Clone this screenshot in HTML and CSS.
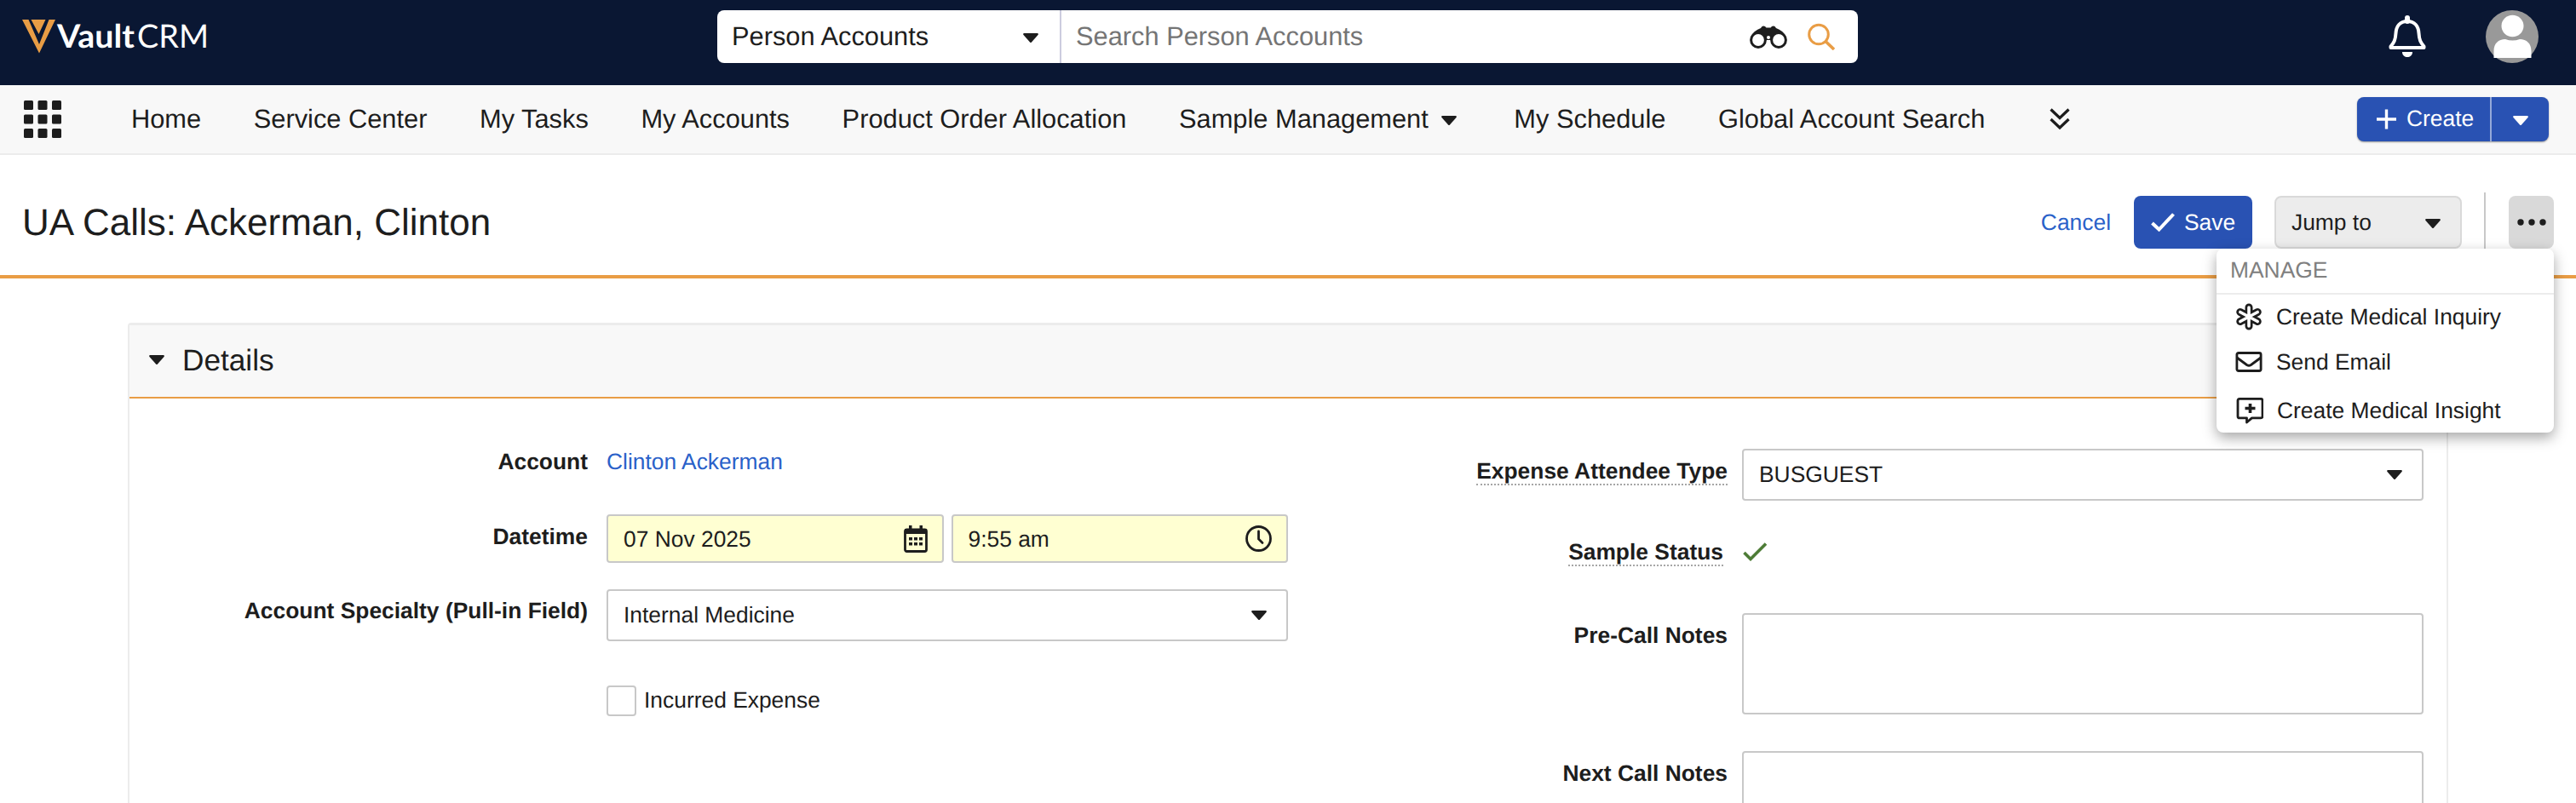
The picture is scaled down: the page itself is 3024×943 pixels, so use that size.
FILE: index.html
```html
<!DOCTYPE html>
<html lang="en">
<head>
    <meta charset="UTF-8">
    <meta name="viewport" content="width=device-width, initial-scale=1.0">
    <title>UA Calls: Ackerman, Clinton</title>
    <link rel="stylesheet" href="styles.css">
</head>
<body>
    <header class="topbar">
        <svg class="logo" width="230" height="64" viewBox="0 -12 230 64">
            <path fill="#e99d45" d="M0 1h7.500l12.500 29L31.500 1H39L20 40.500z"/>
            <path fill="#e99d45" d="M10.500 1h17L19.500 18z"/>
            <text class="logo-bold" x="41" y="34" textLength="91" lengthAdjust="spacingAndGlyphs">Vault</text>
            <text class="logo-light" x="135" y="34" textLength="84" lengthAdjust="spacingAndGlyphs">CRM</text>
        </svg>

        <div class="search">
            <div class="search-type">
                <span>Person Accounts</span>
                <svg class="caret" viewBox="0 0 18 11"><path d="M1 0h16q1.500 .5 .5 2L10 10.500q-1 1-2 0L.5 2Q-.5 .5 1 0z"/></svg>
            </div>
            <div class="search-field">
                <span>Search Person Accounts</span>
                <svg class="binoculars" width="44" height="28" viewBox="0 0 44 28">
                    <path d="M13 3q2-3.500 5-2l1.500 1.500h5L26 1q3-1.500 5 2 8 3 11 9l-13 0-7-1-7 1-13 0Q5 6 13 3z"/>
                    <path d="M12 7h20v10H12z"/>
                    <circle cx="10" cy="17" r="8.400" fill="#fff" stroke="#1d1d1d" stroke-width="3"/>
                    <circle cx="34" cy="17" r="8.400" fill="#fff" stroke="#1d1d1d" stroke-width="3"/>
                    <circle cx="22" cy="14" r="2" fill="#fff"/>
                </svg>
                <svg width="32" height="32" viewBox="0 0 32 32" fill="none" stroke="#e99d45" stroke-width="3">
                    <circle cx="13" cy="13.500" r="11.300"/>
                    <path d="M21 21.500l10 9.500" stroke-width="3.600"/>
                </svg>
            </div>
        </div>

        <div class="user-tools">
            <svg width="44" height="50" viewBox="0 0 44 50" fill="none" stroke="#fff" stroke-width="4" stroke-linejoin="round">
                <path d="M22 7C13 7 9 13 8.500 21 8 29 6.500 32 2.500 36.500V38h39v-1.500C37.500 32 36 29 35.500 21 35 13 31 7 22 7z"/>
                <path d="M22 7V3" stroke-width="6" stroke-linecap="round"/>
                <path d="M16 43h12c0 8-12 8-12 0z" fill="#fff" stroke="none"/>
            </svg>
            <svg width="62" height="62" viewBox="0 0 62 62">
                <circle cx="31" cy="31" r="31" fill="#999"/>
                <ellipse cx="31.500" cy="18.500" rx="13" ry="12.700" fill="#fff"/>
                <path fill="#fff" d="M9.500 56V48C9.500 39 15 34 23 34q8.500 3 17 0C48 34 53.500 39 53.500 48v8z"/>
            </svg>
        </div>
    </header>

    <nav class="navbar">
        <svg class="apps" width="44" height="44" viewBox="0 0 44 44">
            <g id="appsRow">
                <rect width="11" height="11" rx="1.500"/>
                <rect x="16.500" width="11" height="11" rx="1.500"/>
                <rect x="33" width="11" height="11" rx="1.500"/>
            </g>
            <use href="#appsRow" y="16.500"/>
            <use href="#appsRow" y="33"/>
        </svg>
        <div class="nav-items">
            <a>Home</a>
            <a>Service Center</a>
            <a>My Tasks</a>
            <a>My Accounts</a>
            <a>Product Order Allocation</a>
            <a>Sample Management <svg class="caret" viewBox="0 0 18 11"><path d="M1 0h16q1.500 .5 .5 2L10 10.500q-1 1-2 0L.5 2Q-.5 .5 1 0z"/></svg></a>
            <a>My Schedule</a>
            <a>Global Account Search</a>
        </div>
        <svg class="more-tabs" width="24" height="26" viewBox="0 0 24 26" fill="none" stroke="#1d1d1d" stroke-width="3.200">
            <path d="M1.500 1.500L12 11.500 22.500 1.500M1.500 13L12 23 22.500 13"/>
        </svg>
        <div class="create-btn">
            <div class="create-main">
                <svg width="23" height="24" viewBox="0 0 23 24" stroke="#fff" stroke-width="3.400"><path d="M11.500 .5v23M0 12h23"/></svg>
                <span>Create</span>
            </div>
            <div class="create-arrow">
                <svg class="caret" viewBox="0 0 18 11"><path d="M1 0h16q1.500 .5 .5 2L10 10.500q-1 1-2 0L.5 2Q-.5 .5 1 0z"/></svg>
            </div>
        </div>
    </nav>

    <div class="page-header">
        <h1>UA Calls: Ackerman, Clinton</h1>
        <div class="actions">
            <a class="link">Cancel</a>
            <div class="save-btn">
                <svg width="28" height="22" viewBox="0 0 28 22" fill="none" stroke="#fff" stroke-width="4"><path d="M1.500 12l8 7.500L26.500 1.500"/></svg>
                <span>Save</span>
            </div>
            <div class="jump-btn">
                <span>Jump to</span>
                <svg class="caret" viewBox="0 0 18 11"><path d="M1 0h16q1.500 .5 .5 2L10 10.500q-1 1-2 0L.5 2Q-.5 .5 1 0z"/></svg>
            </div>
            <div class="divider"></div>
            <div class="more-btn">
                <svg width="34" height="8" viewBox="0 0 34 8"><circle cx="4" cy="4" r="3.700"/><circle cx="17" cy="4" r="3.700"/><circle cx="30" cy="4" r="3.700"/></svg>
                <div class="menu">
                    <div class="menu-title">MANAGE</div>
                    <div class="menu-item">
                        <svg width="32" height="32" viewBox="0 0 32 32">
                            <g stroke="#1d1d1d" stroke-width="9" stroke-linecap="round">
                                <path d="M16 5v22M5.800 10.500l20.400 11M26.200 10.500l-20.400 11"/>
                            </g>
                            <g stroke="#fff" stroke-width="3.600" stroke-linecap="round">
                                <path d="M16 5v22M5.800 10.500l20.400 11M26.200 10.500l-20.400 11"/>
                            </g>
                        </svg>
                        <span>Create Medical Inquiry</span>
                    </div>
                    <div class="menu-item email">
                        <svg width="32" height="24" viewBox="0 0 32 24" fill="none" stroke="#1d1d1d" stroke-width="2.800">
                            <rect x="1.900" y="1.500" width="28.200" height="21" rx="2"/>
                            <path d="M2 7l11.500 8.500q2.500 1.500 5 0L30 7"/>
                        </svg>
                        <span>Send Email</span>
                    </div>
                    <div class="menu-item insight">
                        <svg width="32" height="32" viewBox="0 0 32 32" fill="none" stroke="#1d1d1d" stroke-width="2.800" stroke-linejoin="round">
                            <path d="M4 2.400h25q2 0 2 2v18.500q0 2-2 2H18.500L12.500 30v-5.100H4q-2 0-2-2V4.400q0-2 2-2z"/>
                            <path d="M16.500 8v11M10.500 13.500h12" stroke-width="3.600"/>
                        </svg>
                        <span>Create Medical Insight</span>
                    </div>
                </div>
            </div>
        </div>
    </div>

    <section class="section">
        <div class="section-header">
            <svg class="caret" viewBox="0 0 18 11"><path d="M1 0h16q1.500 .5 .5 2L10 10.500q-1 1-2 0L.5 2Q-.5 .5 1 0z"/></svg>
            <h2>Details</h2>
        </div>
        <div class="section-body">
            <div class="column left">
                <div class="field account">
                    <label>Account</label>
                    <div class="value text"><a class="link">Clinton Ackerman</a></div>
                </div>
                <div class="field datetime">
                    <label>Datetime</label>
                    <div class="value">
                        <div class="input required">
                            <span>07 Nov 2025</span>
                            <svg width="28" height="32" viewBox="0 0 28 32">
                                <rect x="1.500" y="5" width="25" height="25.500" rx="2" fill="none" stroke="#1d1d1d" stroke-width="2.800"/>
                                <path d="M1 4h26v6H1zM6 0h3.500v6H6zM18.500 0H22v6h-3.500z"/>
                                <path d="M6 14h4v3.500H6zM12 14h4v3.500h-4zM18 14h4v3.500h-4zM6 20h4v3.500H6zM12 20h4v3.500h-4zM18 20h4v3.500h-4z"/>
                            </svg>
                        </div>
                        <div class="input required">
                            <span>9:55 am</span>
                            <svg width="31" height="31" viewBox="0 0 31 31" fill="none" stroke="#1d1d1d" stroke-width="2.800">
                                <circle cx="15.500" cy="15.500" r="14"/>
                                <path d="M15.500 7v9l4.500 4.500" stroke-linecap="round"/>
                            </svg>
                        </div>
                    </div>
                </div>
                <div class="field specialty">
                    <label>Account Specialty (Pull-in Field)</label>
                    <div class="value">
                        <div class="input select">
                            <span>Internal Medicine</span>
                            <svg class="caret" viewBox="0 0 18 11"><path d="M1 0h16q1.500 .5 .5 2L10 10.500q-1 1-2 0L.5 2Q-.5 .5 1 0z"/></svg>
                        </div>
                    </div>
                </div>
                <div class="field">
                    <label></label>
                    <div class="value checkbox-row">
                        <div class="checkbox"></div>
                        <span>Incurred Expense</span>
                    </div>
                </div>
            </div>

            <div class="column right">
                <div class="field attendee">
                    <label><span class="hint">Expense Attendee Type</span></label>
                    <div class="value">
                        <div class="input select">
                            <span>BUSGUEST</span>
                            <svg class="caret" viewBox="0 0 18 11"><path d="M1 0h16q1.500 .5 .5 2L10 10.500q-1 1-2 0L.5 2Q-.5 .5 1 0z"/></svg>
                        </div>
                    </div>
                </div>
                <div class="field status">
                    <label><span class="hint">Sample Status</span></label>
                    <div class="value text">
                        <svg width="30" height="22" viewBox="0 0 30 22" fill="none" stroke="#4d7c36" stroke-width="3.600"><path d="M2.500 12l7.500 7.500L28 1.500"/></svg>
                    </div>
                </div>
                <div class="field notes">
                    <label>Pre-Call Notes</label>
                    <div class="value"><div class="input textarea"></div></div>
                </div>
                <div class="field notes">
                    <label>Next Call Notes</label>
                    <div class="value"><div class="input textarea"></div></div>
                </div>
            </div>
        </div>
    </section>
</body>
</html>
```

FILE: styles.css
```css
* {
    margin: 0;
    padding: 0;
    box-sizing: border-box;
}

body {
    font-family: 'Liberation Sans', Arial, sans-serif;
    font-size: 26.4px;
    line-height: 32px;
    color: #1d1d1d;
    background: #fff;
    height: 943px;
    overflow: hidden;
    text-rendering: geometricPrecision;
}

svg {
    display: block;
    flex-shrink: 0;
    fill: #1d1d1d;
}

svg[fill="none"] {
    fill: none;
}

.caret {
    width: 18px;
    height: 11px;
}

.link {
    color: #2a61c9;
}

/* Top bar */
.topbar {
    display: flex;
    height: 100px;
    padding-top: 12px;
    background: #0a1733;
    font-size: 30.8px;
}

.logo {
    margin: -2px 586px 0 26px;
}

.logo text {
    font-family: Lato, sans-serif;
    font-size: 38px;
    fill: #fff;
}

.logo-bold {
    font-weight: 700;
}

.logo-light {
    font-weight: 400;
}

.search {
    display: flex;
    width: 1339px;
    height: 62px;
    background: #fff;
    border-radius: 8px;
}

.search-type {
    display: flex;
    align-items: center;
    justify-content: space-between;
    width: 404px;
    padding: 0 25px 0 17px;
    border-right: 2px solid #ccccdf;
}

.search-type .caret {
    margin-top: 2px;
}

.search-type span,
.search-field span {
    padding-bottom: 1px;
}

.search-field {
    flex: 1;
    display: flex;
    align-items: center;
    padding: 0 27px 0 17px;
}

.search-field span {
    flex: 1;
    color: #757575;
}

.search-field .binoculars {
    margin: 2px 24px 0 0;
}

.user-tools {
    display: flex;
    margin-left: auto;
    padding-right: 44px;
    gap: 70px;
}

.user-tools svg:first-child {
    margin-top: 6px;
}

/* Navigation */
.navbar {
    display: flex;
    align-items: center;
    height: 82px;
    padding: 0 32px 0 28px;
    background: #f8f8f8;
    border-bottom: 2px solid #ececec;
    font-size: 30.8px;
}

.nav-items {
    display: flex;
    gap: 61.6px;
    margin-left: 82px;
}

.nav-items a {
    display: flex;
    align-items: center;
    white-space: nowrap;
}

.nav-items .caret {
    margin: 3px 6px 0 15px;
}

.more-tabs {
    margin-left: 76px;
}

.create-btn {
    display: flex;
    width: 225px;
    height: 52px;
    margin-left: auto;
    background: #2952b3;
    color: #fff;
    border-radius: 8px;
    box-shadow: 0 1px 2px rgba(0, 0, 0, 0.4);
    font-size: 26.4px;
}

.create-main {
    display: flex;
    align-items: center;
    gap: 12px;
    width: 158px;
    padding-left: 23px;
    border-right: 2px solid #94a9d9;
}

.create-main span {
    margin-top: -2px;
}

.create-arrow {
    flex: 1;
    display: flex;
    align-items: center;
    justify-content: center;
}

.create-arrow .caret {
    fill: #fff;
    margin-top: 3px;
}

/* Page header */
.page-header {
    display: flex;
    justify-content: space-between;
    height: 145px;
    padding: 44px 26px 0 26px;
    border-bottom: 4px solid #e99d45;
}

.page-header h1 {
    font-size: 44px;
    font-weight: 400;
    line-height: 71px;
}

.actions {
    display: flex;
    align-items: center;
    height: 70px;
}

.save-btn {
    display: flex;
    align-items: center;
    gap: 11px;
    width: 139px;
    height: 62px;
    margin: 0 26px 0 27px;
    padding-left: 20px;
    background: #2952b3;
    color: #fff;
    border-radius: 8px;
}

.jump-btn {
    display: flex;
    align-items: center;
    justify-content: space-between;
    width: 220px;
    height: 62px;
    padding: 0 23px 0 18px;
    background: #ececec;
    border: 2px solid #d9d9d9;
    border-radius: 8px;
}

.jump-btn .caret {
    margin-top: 3px;
}

.divider {
    width: 2px;
    height: 70px;
    margin: 0 27px 0 26px;
    background: #c8c8c8;
}

.more-btn {
    position: relative;
    display: flex;
    align-items: center;
    justify-content: center;
    width: 53px;
    height: 62px;
    background: #d9d9d9;
    border-radius: 8px;
}

.menu {
    position: absolute;
    top: 62px;
    right: 0;
    z-index: 10;
    width: 396px;
    height: 216px;
    background: #fff;
    border-radius: 8px;
    box-shadow: 0 6px 16px rgba(0, 0, 0, 0.35);
}

.menu-title {
    height: 54px;
    padding: 9px 16px 0;
    border-bottom: 2px solid #ececec;
    color: #808080;
}

.menu-item {
    display: flex;
    align-items: center;
    gap: 16px;
    height: 52px;
    padding-left: 22px;
    white-space: nowrap;
}

.menu-item.email {
    height: 54px;
}

.menu-item.insight {
    height: 60px;
    padding-left: 23px;
}

/* Details section */
.section {
    margin: 52px 150px 0 150px;
    height: 564px;
    overflow: hidden;
    border: 2px solid #ececec;
    border-top-width: 3px;
    border-bottom: none;
    border-radius: 4px 4px 0 0;
}

.section-header {
    display: flex;
    align-items: center;
    height: 86px;
    padding-left: 23px;
    background: #f8f8f8;
    border-bottom: 2px solid #e99d45;
}

.section-header .caret {
    margin-top: -3px;
}

.section-header h2 {
    margin-left: 21px;
    font-size: 35.2px;
    font-weight: 400;
}

.section-body {
    display: flex;
    justify-content: space-between;
    padding-right: 27px;
}

.left {
    padding-top: 48px;
}

.right {
    padding-top: 59px;
}

.field {
    display: flex;
}

.field label {
    width: 538px;
    padding-top: 10px;
    text-align: right;
    font-weight: 700;
}

.value {
    display: flex;
    gap: 9px;
    width: 800px;
    margin-left: 22px;
}

.right label {
    width: 500px;
}

.right .value {
    margin-left: 17px;
}

.value.text {
    padding-top: 10px;
}

.account {
    height: 50px;
    margin-bottom: 38px;
}

.datetime {
    margin-bottom: 31px;
}

.specialty {
    margin-bottom: 52px;
}

.specialty label {
    padding-top: 9px;
}

.attendee {
    margin-bottom: 34px;
}

.status {
    height: 50px;
    margin-bottom: 48px;
}

.status label {
    padding-right: 5px;
}

.status svg {
    margin-top: 5px;
}

.notes {
    margin-bottom: 43px;
}

.notes:last-child {
    margin-bottom: 0;
}

.hint {
    border-bottom: 2px dotted #a6a6a6;
}

.input {
    flex: 1;
    display: flex;
    align-items: center;
    justify-content: space-between;
    height: 61px;
    padding: 0 17px 0 18px;
    background: #fff;
    border: 2px solid #c8c8c8;
    border-radius: 4px;
}

.input.required {
    height: 57px;
    background: #ffffd2;
}

.input.select {
    padding-right: 23px;
}

.input.select span {
    margin-top: -2px;
}

.input.textarea {
    height: 119px;
}

.checkbox-row {
    align-items: center;
}

.checkbox {
    width: 35px;
    height: 36px;
    border: 2px solid #c8c8c8;
    border-radius: 4px;
}

.checkbox-row span {
    margin-top: -2px;
}
```
